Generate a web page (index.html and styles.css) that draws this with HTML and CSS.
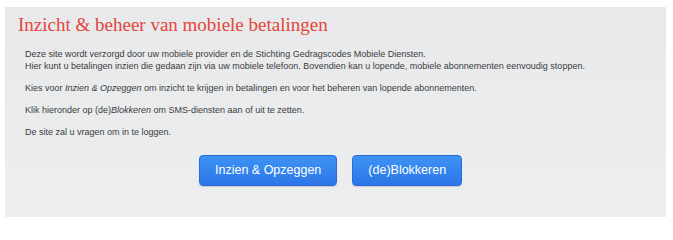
FILE: index.html
```html
<!DOCTYPE html>
<html lang="nl">
<head>
<meta charset="utf-8">
<title>Inzicht &amp; beheer van mobiele betalingen</title>
<link rel="stylesheet" href="styles.css">
</head>
<body>
<div class="panel">
  <h1 class="title">Inzicht &amp; beheer van mobiele betalingen</h1>
  <div class="intro">
    <p>Deze site wordt verzorgd door uw mobiele provider en de Stichting Gedragscodes Mobiele Diensten.<br>Hier kunt u betalingen inzien die gedaan zijn via uw mobiele telefoon. Bovendien kan u lopende, mobiele abonnementen eenvoudig stoppen.</p>
    <p>Kies voor <em>Inzien &amp; Opzeggen</em> om inzicht te krijgen in betalingen en voor het beheren van lopende abonnementen.</p>
    <p>Klik hieronder op (de)<em>Blokkeren</em> om SMS-diensten aan of uit te zetten.</p>
    <p>De site zal u vragen om in te loggen.</p>
  </div>
  <div class="actions">
    <a class="btn" href="#">Inzien &amp; Opzeggen</a>
    <a class="btn" href="#">(de)Blokkeren</a>
  </div>
</div>
</body>
</html>
```
FILE: styles.css
```css
html, body {
  margin: 0;
  padding: 0;
  background: #ffffff;
}
.panel {
  box-sizing: border-box;
  margin: 7px 7px 0 5px;
  height: 210px;
  padding: 7px 13px 0 13px;
  background: linear-gradient(180deg, #e8e9eb 0%, #eceef0 100%);
}
.title {
  margin: 0;
  font-family: "Liberation Serif", Georgia, serif;
  font-weight: normal;
  font-size: 19px;
  line-height: 22px;
  color: #e4463c;
}
.intro {
  padding-left: 7px;
  margin-top: 12px;
  font-family: "Liberation Sans", Arial, sans-serif;
  font-size: 9px;
  line-height: 12px;
  color: #3c3c3c;
}
.intro p {
  margin: 0 0 10px;
}
.intro p:last-child {
  margin-bottom: 0;
}
.actions {
  display: flex;
  gap: 15px;
  padding-left: 181px;
  margin-top: 17px;
}
.btn {
  display: block;
  box-sizing: border-box;
  height: 31px;
  padding: 0 15px;
  line-height: 29px;
  font-family: "Liberation Sans", Arial, sans-serif;
  font-size: 12.5px;
  color: #ffffff;
  text-decoration: none;
  border: 1px solid #2a6bd9;
  border-radius: 4px;
  background: linear-gradient(180deg, #3e93f4 0%, #2c76e8 100%);
  box-shadow: 0 1px 1px rgba(0,0,0,0.15);
}
```
